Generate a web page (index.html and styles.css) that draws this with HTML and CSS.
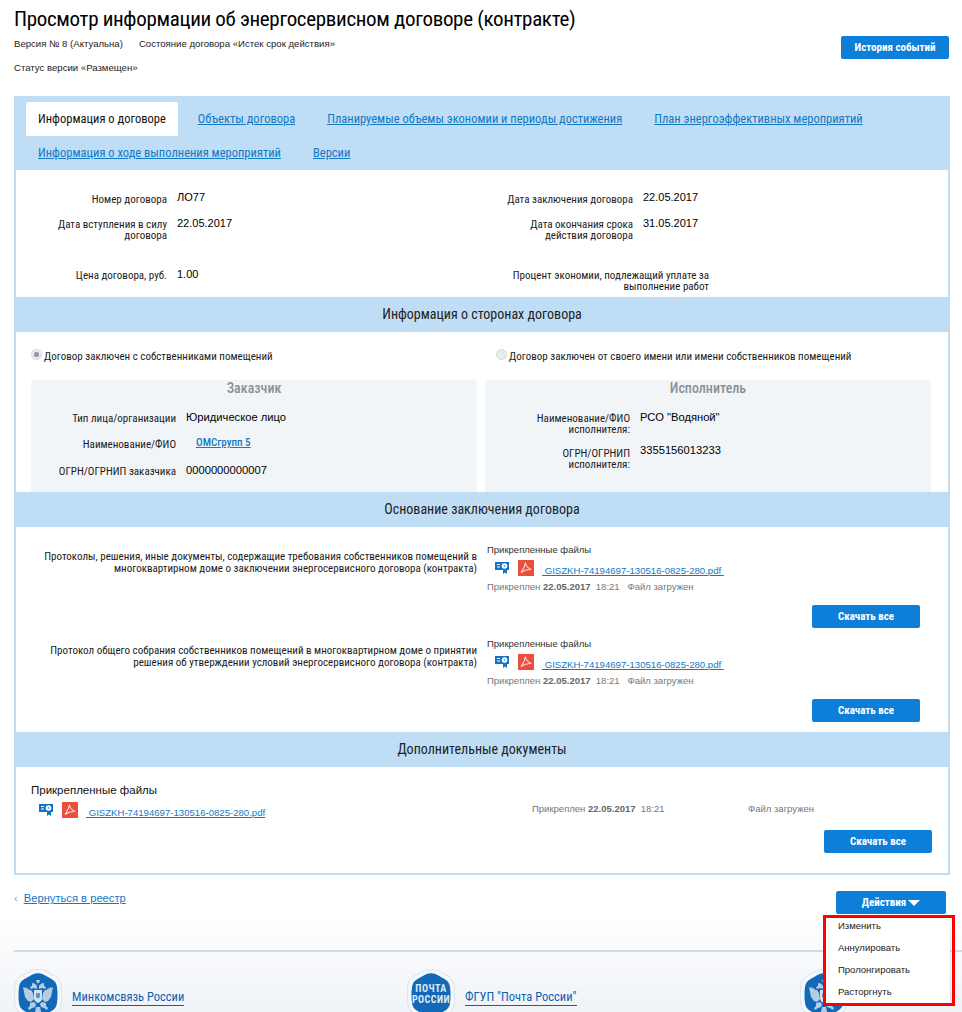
FILE: index.html
```html
<!DOCTYPE html>
<html lang="ru">
<head>
    <meta charset="UTF-8">
    <meta name="viewport" content="width=device-width, initial-scale=1.0">
    <title>Просмотр информации об энергосервисном договоре</title>
    <link rel="stylesheet" href="styles.css">
</head>
<body>
    <svg class="sprite" width="0" height="0">
        <symbol id="icon-sign" viewBox="0 0 14 12">
            <path d="M0 0h14v8h-2v4l-2-1.500L8 12V8H0z" fill="#1273c9"/>
            <rect x="2" y="2" width="3" height="1" fill="#fff"/>
            <rect x="2" y="4.500" width="3" height="1" fill="#fff"/>
            <circle cx="9.500" cy="4" r="2.800" fill="#fff"/>
            <circle cx="9.500" cy="4" r=".8" fill="#1273c9"/>
        </symbol>
        <symbol id="icon-pdf" viewBox="0 0 16 16">
            <rect width="16" height="16" fill="#ea4f3d"/>
            <path d="M7.400 2.500c-.3 3-1.800 6.500-4.400 10M7.400 2.500c.5 3.500 2.500 5.800 6 7M3 12.500c3-2.200 6-3.300 10.400-3" fill="none" stroke="#fbd9d4" stroke-width="1.100"/>
        </symbol>
        <symbol id="hex" viewBox="0 0 48 52">
            <path d="M17 1.500c4-1.500 10-1.500 14 0l9 5c4 2.300 6.500 5 7 9.500 .8 6.500 .8 13 0 19.500-.5 4.500-3 7.200-7 9.500l-9 5c-4 1.500-10 1.500-14 0l-9-5c-4-2.300-6.500-5-7-9.500-.8-6.500-.8-13 0-19.500C1.500 11.500 4 8.800 8 6.500z" fill="#f4f8fb" stroke="#d9e4ee"/>
            <path d="M18.500 5.500c3.500-1.600 7.500-1.600 11 0l8 4.500c3.400 2 5 4.200 5.500 8 .7 5.300.7 10.700 0 16-.5 3.800-2.100 6-5.500 8l-8 4.500c-3.500 1.600-7.500 1.600-11 0l-8-4.500c-3.400-2-5-4.200-5.500-8-.7-5.300-.7-10.700 0-16 .5-3.800 2.100-6 5.500-8z" fill="#1269b8"/>
        </symbol>
        <symbol id="crest" viewBox="0 0 32 34">
            <g fill="#b4cde5">
                <path d="M14 1h4l-1 3h-2z"/>
                <path d="M10 4c2 0 4 1 5 3v3l-3-1-3 1-1-2 2-1z"/>
                <path d="M22 4c-2 0-4 1-5 3v3l3-1 3 1 1-2-2-1z"/>
                <path d="M1 8l2 1 1-1 1 2 1-1 1 2 2 0 2 3 1 6-3 3-3-1-3-4-1-5z"/>
                <path d="M31 8l-2 1-1-1-1 2-1-1-1 2-2 0-2 3-1 6 3 3 3-1 3-4 1-5z"/>
                <path d="M8 24l4-1 2 2-1 3-3 1-3 2-1-2 2-2z"/>
                <path d="M24 24l-4-1-2 2 1 3 3 1 3 2 1-2-2-2z"/>
                <path d="M14 28h4l1 5h-6z"/>
            </g>
            <path d="M12 11h8v8c0 3-2 4-4 5-2-1-4-2-4-5z" fill="#d5e3f1"/>
            <path d="M14 14h4v4l-2 2-2-2z" fill="#5f97cc"/>
        </symbol>
    </svg>

    <div class="page">
        <header class="page-head">
            <div>
                <h1 class="page-title">Просмотр информации об энергосервисном договоре (контракте)</h1>
                <p class="page-meta"><span>Версия № 8 (Актуальна)</span><span>Состояние договора «Истек срок действия»</span></p>
                <p class="page-meta page-meta-last">Статус версии «Размещен»</p>
            </div>
            <a class="btn btn-history">История событий</a>
        </header>

        <div class="card">
            <nav class="tabs">
                <a class="tab tab-active">Информация о договоре</a>
                <a class="tab">Объекты договора</a>
                <a class="tab">Планируемые объемы экономии и периоды достижения</a>
                <a class="tab">План энергоэффективных мероприятий</a>
                <a class="tab">Информация о ходе выполнения мероприятий</a>
                <a class="tab">Версии</a>
            </nav>

            <section class="info">
                <div class="field field-a"><span class="label">Номер договора</span><span class="value">ЛО77</span></div>
                <div class="field field-a"><span class="label">Дата заключения договора</span><span class="value">22.05.2017</span></div>
                <div class="field field-b"><span class="label">Дата вступления в силу<br>договора</span><span class="value">22.05.2017</span></div>
                <div class="field field-b"><span class="label">Дата окончания срока<br>действия договора</span><span class="value">31.05.2017</span></div>
                <div class="field field-c"><span class="label">Цена договора, руб.</span><span class="value">1.00</span></div>
                <div class="field field-c field-wide"><span class="label">Процент экономии, подлежащий уплате за<br>выполнение работ</span></div>
            </section>

            <h2 class="section-title">Информация о сторонах договора</h2>
            <section class="parties">
                <div class="radio-row"><span class="radio radio-on"></span>Договор заключен с собственниками помещений</div>
                <div class="radio-row"><span class="radio"></span>Договор заключен от своего имени или имени собственников помещений</div>
                <div class="party">
                    <h3 class="party-title">Заказчик</h3>
                    <div class="party-field pf-1"><span class="label">Тип лица/организации</span><span class="value">Юридическое лицо</span></div>
                    <div class="party-field pf-2"><span class="label">Наименование/ФИО</span><a class="party-link">ОМСгрупп 5</a></div>
                    <div class="party-field pf-3"><span class="label">ОГРН/ОГРНИП заказчика</span><span class="value">0000000000007</span></div>
                </div>
                <div class="party">
                    <h3 class="party-title">Исполнитель</h3>
                    <div class="party-field pf-4"><span class="label">Наименование/ФИО<br>исполнителя:</span><span class="value">РСО "Водяной"</span></div>
                    <div class="party-field pf-5"><span class="label">ОГРН/ОГРНИП<br>исполнителя:</span><span class="value">3355156013233</span></div>
                </div>
            </section>

            <h2 class="section-title">Основание заключения договора</h2>
            <section class="basis">
                <div class="doc">
                    <p class="doc-label">Протоколы, решения, иные документы, содержащие требования собственников помещений в многоквартирном доме о заключении энергосервисного договора (контракта)</p>
                    <div class="files">
                        <div class="files-title">Прикрепленные файлы</div>
                        <div class="file">
                            <svg class="ico-sign"><use href="#icon-sign"/></svg>
                            <svg class="ico-pdf"><use href="#icon-pdf"/></svg>
                            <a class="file-link">&nbsp;GISZKH-74194697-130516-0825-280.pdf&nbsp;</a>
                        </div>
                        <div class="file-meta">Прикреплен <b>22.05.2017</b>&nbsp; 18:21 &nbsp; Файл загружен</div>
                    </div>
                    <div class="doc-actions"><a class="btn">Скачать все</a></div>
                </div>
                <div class="doc">
                    <p class="doc-label">Протокол общего собрания собственников помещений в многоквартирном доме о принятии решения об утверждении условий энергосервисного договора (контракта)</p>
                    <div class="files">
                        <div class="files-title">Прикрепленные файлы</div>
                        <div class="file">
                            <svg class="ico-sign"><use href="#icon-sign"/></svg>
                            <svg class="ico-pdf"><use href="#icon-pdf"/></svg>
                            <a class="file-link">&nbsp;GISZKH-74194697-130516-0825-280.pdf&nbsp;</a>
                        </div>
                        <div class="file-meta">Прикреплен <b>22.05.2017</b>&nbsp; 18:21 &nbsp; Файл загружен</div>
                    </div>
                    <div class="doc-actions"><a class="btn">Скачать все</a></div>
                </div>
            </section>

            <h2 class="section-title">Дополнительные документы</h2>
            <section class="extra">
                <div class="extra-title">Прикрепленные файлы</div>
                <div class="extra-row">
                    <div class="file">
                        <svg class="ico-sign"><use href="#icon-sign"/></svg>
                        <svg class="ico-pdf"><use href="#icon-pdf"/></svg>
                        <a class="file-link">&nbsp;GISZKH-74194697-130516-0825-280.pdf</a>
                    </div>
                    <div class="file-meta">Прикреплен <b>22.05.2017</b>&nbsp; 18:21</div>
                    <div class="file-meta">Файл загружен</div>
                </div>
                <div class="extra-actions"><a class="btn">Скачать все</a></div>
            </section>
        </div>

        <div class="page-foot">
            <div class="back"><span class="back-arrow">‹</span><a class="back-link">Вернуться в реестр</a></div>
            <div class="actions">
                <a class="btn btn-actions">Действия<span class="caret"></span></a>
                <ul class="menu">
                    <li>Изменить</li>
                    <li>Аннулировать</li>
                    <li>Пролонгировать</li>
                    <li>Расторгнуть</li>
                </ul>
                <div class="highlight"></div>
            </div>
        </div>
    </div>

    <footer class="site-foot">
        <div class="site-foot-line"></div>
        <div class="partners">
            <div class="partner">
                <div class="logo">
                    <svg class="logo-hex"><use href="#hex"/></svg>
                    <svg class="logo-crest"><use href="#crest"/></svg>
                </div>
                <a class="partner-link">Минкомсвязь России</a>
            </div>
            <div class="partner">
                <div class="logo">
                    <svg class="logo-hex"><use href="#hex"/></svg>
                    <span class="logo-text">ПОЧТА<br>РОССИИ</span>
                </div>
                <a class="partner-link">ФГУП "Почта России"</a>
            </div>
            <div class="partner">
                <div class="logo">
                    <svg class="logo-hex"><use href="#hex"/></svg>
                    <svg class="logo-crest"><use href="#crest"/></svg>
                </div>
            </div>
        </div>
    </footer>
</body>
</html>
```

FILE: styles.css
```css
html, body {
    margin: 0;
    height: 1012px;
    overflow: hidden;
    background: #fff;
}
body {
    font-family: Roboto, "Liberation Sans", sans-serif;
    font-stretch: condensed;
    font-size: 11px;
    color: #111;
}
.sprite {
    position: absolute;
}
a {
    cursor: pointer;
}
.page {
    padding: 0 12px 0 14px;
}
.page-head {
    display: flex;
    justify-content: space-between;
    height: 96px;
}
.page-title {
    margin: 0;
    padding-top: 7px;
    font-size: 21px;
    line-height: 24px;
    font-weight: 400;
    letter-spacing: -.33px;
    color: #000;
}
.page-meta {
    margin: 6px 0 0;
    font-family: "Liberation Sans", sans-serif;
    font-size: 9.600px;
    line-height: 14px;
    color: #222;
}
.page-meta span + span {
    margin-left: 16px;
}
.page-meta-last {
    margin-top: 10px;
}
.btn {
    display: block;
    width: 108px;
    height: 23px;
    background: #0e7fd9;
    border-radius: 2px;
    color: #fff;
    font-family: Roboto, sans-serif;
    font-size: 11px;
    font-weight: 700;
    line-height: 24px;
    text-align: center;
}
.btn-history {
    margin: 36px 1px 0 0;
}

.card {
    border: 2px solid #c0ddf6;
    border-top: 0;
    width: 936px;
    box-sizing: border-box;
    height: 779px;
}
.tabs {
    display: flex;
    flex-wrap: wrap;
    background: #c0ddf6;
    height: 74px;
    padding: 6px 0 0 12px;
    box-sizing: border-box;
    align-content: flex-start;
    margin: 0 -2px;
    font-size: 12.500px;
}
.tab {
    height: 34px;
    line-height: 34px;
    padding: 0 12px;
    margin-right: 8px;
    color: #1279c4;
    text-decoration: underline;
}
.tab-active {
    background: #fff;
    color: #111;
    text-decoration: none;
    border-radius: 2px 2px 0 0;
}
.info {
    display: grid;
    grid-template-columns: 466px 466px;
    height: 127px;
    align-content: start;
}
.field {
    display: grid;
    grid-template-columns: 151px auto;
    column-gap: 10px;
    justify-content: start;
    align-items: start;
}
.field-a {
    padding-top: 22px;
    height: 25px;
}
.field-a .value {
    margin-top: -1px;
}
.field-b {
    height: 51px;
}
.field-wide {
    grid-template-columns: 227px;
}
.label {
    text-align: right;
    font-size: 11px;
    line-height: 11px;
    padding-top: 2px;
    color: #1c1c1c;
}
.value {
    font-family: "Liberation Sans", sans-serif;
    font-size: 11px;
    line-height: 13px;
    color: #000;
}
.section-title {
    margin: 0 -2px;
    height: 35px;
    background: #c0ddf6;
    font-size: 14px;
    font-weight: 400;
    line-height: 34px;
    text-align: center;
    color: #222;
}
.parties {
    display: grid;
    grid-template-columns: 446px 446px;
    column-gap: 8px;
    padding: 0 15px;
    height: 160px;
    grid-template-rows: 48px 112px;
}
.radio-row {
    display: flex;
    align-items: center;
    height: 48px;
    font-size: 11px;
    color: #1c1c1c;
}
.radio-row + .radio-row {
    padding-left: 11px;
}
.radio {
    width: 9px;
    height: 9px;
    margin: -3px 2px 0 0;
    border: 1px solid #d5d8db;
    border-radius: 50%;
    background: #e9ebed;
}
.radio-on {
    background: radial-gradient(circle, #9a9da0 0 2.500px, #e9ebed 3px);
}
.party {
    background: #f2f5f8;
    border-radius: 2px 2px 0 0;
}
.party-title {
    margin: 0;
    height: 31px;
    font-size: 14px;
    line-height: 16px;
    font-weight: 500;
    color: #8b9096;
    text-align: center;
}
.party-field {
    display: grid;
    grid-template-columns: 145px auto;
    column-gap: 10px;
    justify-content: start;
    align-items: start;
    margin-bottom: 11px;
}
.pf-1 {
    margin-bottom: 13px;
}
.pf-2 {
    margin-bottom: 14px;
}
.pf-5 .value {
    margin-top: -2px;
}
.party-field .value {
    font-size: 11.200px;
}
.party-link {
    font-size: 11px;
    line-height: 12px;
    font-weight: 500;
    color: #1279c4;
    text-decoration: underline;
    padding: 0 0 0 10px;
}
.basis {
    height: 205px;
}
.doc {
    display: grid;
    grid-template-columns: 446px 1fr;
    column-gap: 10px;
    padding: 17px 0 0 15px;
    height: 94px;
    grid-template-rows: 61px 23px;
}
.doc + .doc {
    padding-top: 0;
    height: 88px;
}
.doc-label {
    margin: 0;
    padding-top: 7px;
    font-size: 11px;
    line-height: 12px;
    text-align: right;
    color: #1c1c1c;
}
.files {
    font-family: "Liberation Sans", sans-serif;
    font-size: 9.500px;
}
.files-title {
    line-height: 12px;
    color: #333;
}
.file {
    display: flex;
    align-items: center;
    height: 22px;
    font-family: "Liberation Sans", sans-serif;
    font-size: 9.600px;
}
.ico-sign {
    width: 14px;
    height: 12px;
    margin: 2px 9px 0 8px;
}
.ico-pdf {
    width: 16px;
    height: 16px;
    margin: 2px 8px 0 0;
}
.file-link {
    padding-top: 6px;
    color: #1279c4;
    text-decoration: underline;
}
.file-meta {
    font-family: "Liberation Sans", sans-serif;
    font-size: 9.500px;
    line-height: 14px;
    color: #777;
}
.files .file-meta {
    margin-top: 2px;
}
.file-meta b {
    color: #666;
}
.doc-actions {
    grid-column: 2;
    display: flex;
    justify-content: flex-end;
    padding-right: 28px;
}
.extra {
    padding: 17px 0 0 15px;
    font-family: "Liberation Sans", sans-serif;
}
.extra-title {
    font-size: 11.500px;
    line-height: 13px;
}
.extra-row {
    display: grid;
    grid-template-columns: 501px 216px auto;
    align-items: center;
    margin-top: 1px;
}
.extra-actions {
    display: flex;
    justify-content: flex-end;
    padding: 10px 16px 0 0;
}

.page-foot {
    display: flex;
    justify-content: space-between;
    height: 76px;
    padding-top: 16px;
    box-sizing: border-box;
}
.back {
    font-family: "Liberation Sans", sans-serif;
    font-size: 11.200px;
    line-height: 14px;
}
.back-arrow {
    color: #8aa2b8;
    margin-right: 6px;
}
.back-link {
    color: #1279c4;
    text-decoration: underline;
}
.actions {
    position: relative;
    margin-right: 4px;
    z-index: 2;
}
.btn-actions {
    width: 110px;
}
.caret {
    display: inline-block;
    width: 0;
    height: 0;
    margin-left: 2px;
    border-left: 6px solid transparent;
    border-right: 6px solid transparent;
    border-top: 6px solid #fff;
}
.menu {
    position: absolute;
    top: 25px;
    right: -4px;
    width: 124px;
    height: 87px;
    margin: 0;
    padding: 0;
    list-style: none;
    background: #fff;
    box-shadow: 0 1px 2px rgba(0,0,0,.2);
    font-family: "Liberation Sans", sans-serif;
    font-size: 9.500px;
    color: #222;
    z-index: 3;
}
.menu li {
    height: 22px;
    line-height: 20px;
    padding-left: 12px;
}
.highlight {
    position: absolute;
    top: 24px;
    left: -13px;
    width: 126px;
    height: 85px;
    border: 3px solid #fe0000;
    z-index: 4;
}

.site-foot {
    position: absolute;
    top: 915px;
    left: 0;
    width: 962px;
    height: 97px;
    overflow: hidden;
    background: linear-gradient(#fff, #f0f3f7);
}
.site-foot-line {
    height: 2px;
    margin: 35px 0 0 14px;
    background: #cfdde9;
}
.partners {
    display: grid;
    grid-template-columns: 393px 393px 160px;
    padding: 17px 0 0 14px;
}
.partner {
    display: flex;
    align-items: flex-start;
}
.logo {
    position: relative;
    width: 48px;
    height: 52px;
    margin-right: 10px;
    flex: none;
}
.logo-hex {
    width: 48px;
    height: 52px;
}
.logo-crest {
    position: absolute;
    top: 10px;
    left: 8px;
    width: 32px;
    height: 34px;
}
.logo-text {
    position: absolute;
    top: 14px;
    left: 0;
    width: 48px;
    text-align: center;
    color: #dfeaf5;
    font-size: 10px;
    line-height: 11px;
    font-weight: 700;
    letter-spacing: .5px;
}
.partner-link {
    margin-top: 21px;
    padding-bottom: 1px;
    border-bottom: 1px solid #0d5fb0;
    font-size: 12.500px;
    line-height: 14px;
    color: #0d5fb0;
}
```
